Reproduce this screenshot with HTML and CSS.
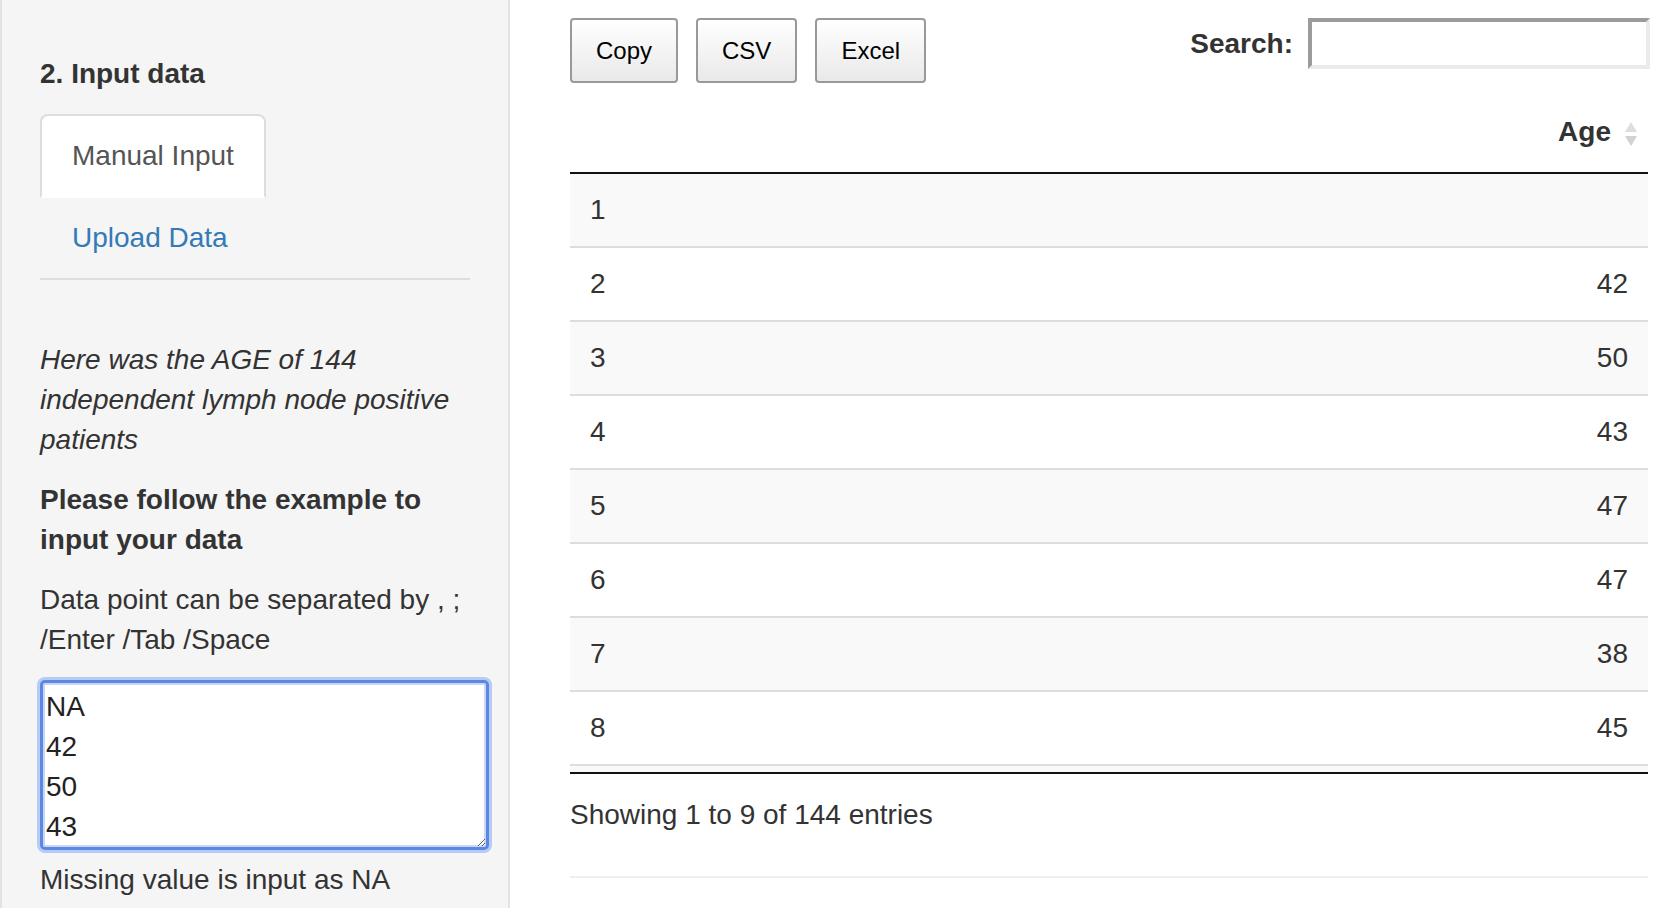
FILE: index.html
```html
<!DOCTYPE html>
<html lang="en">
<head>
<meta charset="utf-8">
<title>Input data</title>
<link rel="stylesheet" href="styles.css">
</head>
<body>
<div class="page">
  <aside class="sidebar">
    <p class="section-title">2. Input data</p>
    <ul class="tabs">
      <li class="tab active"><a>Manual Input</a></li>
      <li class="tab"><a>Upload Data</a></li>
    </ul>
    <div class="tab-content">
      <p class="note"><em>Here was the AGE of 144 independent lymph node positive patients</em></p>
      <p class="strong"><b>Please follow the example to input your data</b></p>
      <p class="plain">Data point can be separated by , ; /Enter /Tab /Space</p>
      <textarea class="data-input" spellcheck="false">NA
42
50
43
47
47
38
45
47
52</textarea>
      <p class="hint">Missing value is input as NA</p>
    </div>
  </aside>
  <main class="main">
    <div class="dt-toolbar">
      <div class="dt-buttons">
        <button class="dt-btn" type="button">Copy</button>
        <button class="dt-btn" type="button">CSV</button>
        <button class="dt-btn" type="button">Excel</button>
      </div>
      <label class="dt-search">Search:<input type="text" class="dt-search-input"></label>
    </div>
    <div class="dt-head">
      <table class="dt-table">
        <thead>
          <tr>
            <th class="col-idx"></th>
            <th class="col-age"><span class="th-inner"><span>Age</span><svg class="sort-icon" width="12" height="26" viewBox="0 0 12 26"><polygon points="0,11 6,1 12,11" fill="#dedede"/><polygon points="0,15 12,15 6,25" fill="#d2d2d2"/></svg></span></th>
          </tr>
        </thead>
      </table>
    </div>
    <div class="dt-body">
      <table class="dt-table">
        <tbody>
          <tr><td class="col-idx">1</td><td class="num"></td></tr>
          <tr><td class="col-idx">2</td><td class="num">42</td></tr>
          <tr><td class="col-idx">3</td><td class="num">50</td></tr>
          <tr><td class="col-idx">4</td><td class="num">43</td></tr>
          <tr><td class="col-idx">5</td><td class="num">47</td></tr>
          <tr><td class="col-idx">6</td><td class="num">47</td></tr>
          <tr><td class="col-idx">7</td><td class="num">38</td></tr>
          <tr><td class="col-idx">8</td><td class="num">45</td></tr>
          <tr class="row-cut"><td class="col-idx"></td><td class="num"></td></tr>
        </tbody>
      </table>
    </div>
    <div class="dt-info">Showing 1 to 9 of 144 entries</div>
    <hr class="rule">
  </main>
</div>
</body>
</html>
```
FILE: styles.css
```css
* {
  box-sizing: border-box;
}

html,
body {
  margin: 0;
  height: 100%;
}

body {
  font-family: "Liberation Sans", Arial, Helvetica, sans-serif;
  font-size: 28px;
  line-height: 40px;
  color: #333;
  background: #fff;
  overflow: hidden;
}

.page {
  display: flex;
  height: 908px;
}

/* ---------- sidebar ---------- */
.sidebar {
  flex: 0 0 510px;
  width: 510px;
  min-width: 0;
  background: #f5f5f5;
  border-left: 2px solid #e3e3e3;
  border-right: 2px solid #e3e3e3;
  padding: 54px 38px 0;
}

.section-title {
  margin: 0 0 20px;
  font-weight: bold;
}

.tabs {
  list-style: none;
  margin: 0;
  padding: 0;
  display: flex;
  flex-wrap: wrap;
  border-bottom: 2px solid #ddd;
}

.tab {
  margin: 0 4px -2px 0;
}

.tab a {
  display: block;
  padding: 20px 30px;
  border: 2px solid transparent;
  border-radius: 8px 8px 0 0;
  color: #337ab7;
  text-decoration: none;
  line-height: 40px;
}

.tab.active a {
  background: #fff;
  border-color: #ddd #ddd transparent;
  color: #555;
}

.tab-content {
  padding-top: 60px;
}

.tab-content p {
  margin: 0 0 20px;
}

.tab-content .hint {
  margin: 10px 0 0;
}

.data-input {
  display: block;
  width: 449px;
  height: 170px;
  margin: 0;
  padding: 4px 2px 0 3px;
  font-family: "Liberation Sans", Arial, Helvetica, sans-serif;
  font-size: 28px;
  line-height: 40px;
  color: #222;
  background: #fff;
  border: 3px solid #5b88e5;
  border-radius: 5px;
  box-shadow: 0 0 0 3px #b8cbf4, inset 0 0 0 2px #c9d7f6;
  outline: none;
  resize: both;
  overflow: hidden;
}

/* ---------- main ---------- */
.main {
  flex: 1 1 auto;
  min-width: 0;
  padding: 18px 28px 0 60px;
}

.dt-toolbar {
  display: flex;
  justify-content: space-between;
  align-items: flex-start;
}

.dt-buttons {
  display: flex;
  gap: 18px;
}

.dt-btn {
  height: 65px;
  padding: 0 24px;
  font-family: "Liberation Sans", Arial, Helvetica, sans-serif;
  font-size: 24px;
  color: #000;
  border: 2px solid #999;
  border-radius: 4px;
  background: linear-gradient(to bottom, #fff 0%, #e9e9e9 100%);
}

.dt-search {
  display: flex;
  align-items: center;
  height: 51px;
  margin-right: -2px;
  font-weight: bold;
}

.dt-search-input {
  width: 342px;
  height: 51px;
  margin-left: 15px;
  padding: 0 6px;
  font: inherit;
  font-weight: normal;
  background: #fff;
  border: 4px solid;
  border-color: #9b9b9b #ebebeb #ebebeb #9b9b9b;
}

.dt-head {
  margin-top: 9px;
}

.dt-table {
  width: 100%;
  border-collapse: separate;
  border-spacing: 0;
}

.dt-table .col-idx {
  width: 50%;
}

.dt-table th {
  padding: 20px 11px 20px 20px;
  border-bottom: 2px solid #111;
  font-weight: bold;
  text-align: right;
  line-height: 40px;
}

.th-inner {
  display: flex;
  justify-content: flex-end;
  align-items: center;
  gap: 14px;
}

.sort-icon {
  flex: 0 0 auto;
  margin-top: 4px;
}

.dt-body {
  height: 600px;
  overflow: hidden;
  border-bottom: 2px solid #111;
}

.dt-table td {
  height: 74px;
  padding: 16px 20px;
  border-bottom: 2px solid #ddd;
  line-height: 40px;
  text-align: left;
}

.dt-table td.num {
  text-align: right;
}

.dt-table tbody tr:nth-child(odd) td {
  background: #f9f9f9;
}

.dt-info {
  padding-top: 21px;
  line-height: 40px;
}

.rule {
  margin: 41px 0 0;
  border: 0;
  border-top: 2px solid #eee;
}
```
